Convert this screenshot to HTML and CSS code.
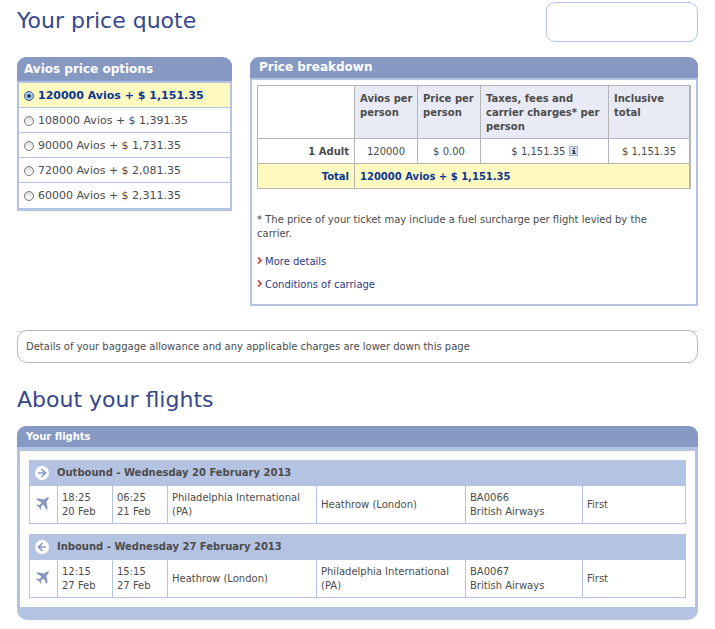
FILE: index.html
```html
<!DOCTYPE html>
<html lang="en">
<head>
<meta charset="utf-8">
<title>Your price quote</title>
<link rel="stylesheet" href="styles.css">
</head>
<body>
<svg class="defs" aria-hidden="true">
  <symbol id="plane" viewBox="0 0 14 14">
    <path d="M13.600.4c-.8-.3-2 .1-2.800.8L9 2.700 1.700 1.400.4 2.600l5.600 3.200L3.900 8.500 1.300 8.100.3 9.100l2.900 1.700 1.500 2.900 1-1-.3-2.600 2.700-2.100 3.200 5.600 1.200-1.300-1.300-7.300 1.600-1.800c.7-.8 1.200-2 .8-2.800z"/>
  </symbol>
  <symbol id="arrow" viewBox="0 0 14 14">
    <circle cx="7" cy="7" r="7" fill="#fff"/>
    <path d="M3 7h7M6.500 3 10.500 7 6.500 11" fill="none" stroke="currentColor" stroke-width="1.700"/>
  </symbol>
</svg>
<main class="page">
  <header class="top">
    <h1 class="title">Your price quote</h1>
    <div class="callout"></div>
  </header>

  <div class="quote">
    <form class="panel options">
      <h2 class="panel-head">Avios price options</h2>
      <div class="panel-body">
        <label class="option selected"><input type="radio" name="price" checked>120000 Avios + $ 1,151.35</label>
        <label class="option"><input type="radio" name="price">108000 Avios + $ 1,391.35</label>
        <label class="option"><input type="radio" name="price">90000 Avios + $ 1,731.35</label>
        <label class="option"><input type="radio" name="price">72000 Avios + $ 2,081.35</label>
        <label class="option"><input type="radio" name="price">60000 Avios + $ 2,311.35</label>
      </div>
    </form>

    <section class="panel breakdown">
      <h2 class="panel-head">Price breakdown</h2>
      <div class="panel-body">
        <table class="prices">
          <colgroup><col class="p-who"><col class="p-avios"><col class="p-price"><col class="p-taxes"><col class="p-total"></colgroup>
          <thead>
            <tr><td></td><th scope="col">Avios per person</th><th scope="col">Price per person</th><th scope="col">Taxes, fees and carrier charges* per person</th><th scope="col">Inclusive total</th></tr>
          </thead>
          <tbody>
            <tr><th scope="row">1 Adult</th><td>120000</td><td>$ 0.00</td><td>$ 1,151.35 <button type="button" class="info" aria-label="Information"><svg viewBox="0 0 9 10"><path d="M4 2h2v1H4zM3 4h3v3h1v1H3V7h1V5H3z"/></svg></button></td><td>$ 1,151.35</td></tr>
            <tr class="sum"><th scope="row">Total</th><td colspan="4">120000 Avios + $ 1,151.35</td></tr>
          </tbody>
        </table>
        <p class="note">* The price of your ticket may include a fuel surcharge per flight levied by the carrier.</p>
        <ul class="links">
          <li><svg viewBox="0 0 5 7"><path d="M1 .5 4 3.500 1 6.500"/></svg><a href="#">More details</a></li>
          <li><svg viewBox="0 0 5 7"><path d="M1 .5 4 3.500 1 6.500"/></svg><a href="#">Conditions of carriage</a></li>
        </ul>
      </div>
    </section>
  </div>

  <div class="baggage"><p>Details of your baggage allowance and any applicable charges are lower down this page</p></div>

  <h1 class="title">About your flights</h1>

  <section class="panel flights">
    <h2 class="panel-head">Your flights</h2>
    <div class="panel-body">
      <table class="flight">
        <colgroup><col class="f-icon"><col class="f-time"><col class="f-time"><col class="f-place"><col class="f-place"><col class="f-number"><col class="f-class"></colgroup>
        <thead><tr><th colspan="7"><div class="leg"><svg><use href="#arrow"/></svg>Outbound - Wednesday 20 February 2013</div></th></tr></thead>
        <tbody><tr><td class="plane"><svg><use href="#plane"/></svg></td><td>18:25<br>20 Feb</td><td>06:25<br>21 Feb</td><td>Philadelphia International (PA)</td><td>Heathrow (London)</td><td>BA0066<br>British Airways</td><td>First</td></tr></tbody>
      </table>
      <table class="flight">
        <colgroup><col class="f-icon"><col class="f-time"><col class="f-time"><col class="f-place"><col class="f-place"><col class="f-number"><col class="f-class"></colgroup>
        <thead><tr><th colspan="7"><div class="leg"><svg class="back"><use href="#arrow"/></svg>Inbound - Wednesday 27 February 2013</div></th></tr></thead>
        <tbody><tr><td class="plane"><svg><use href="#plane"/></svg></td><td>12:15<br>27 Feb</td><td>15:15<br>27 Feb</td><td>Heathrow (London)</td><td>Philadelphia International (PA)</td><td>BA0067<br>British Airways</td><td>First</td></tr></tbody>
      </table>
    </div>
  </section>
</main>
</body>
</html>
```
FILE: styles.css
```css
* { box-sizing: border-box; }
body {
  margin: 0;
  background: #fff;
  color: #4c4c4c;
  font: 10px/14px Verdana, "DejaVu Sans", sans-serif;
}
h1, h2, p, ul { margin: 0; padding: 0; }
.defs { display: none; }
.page { padding: 2px 17px 9px; }

.top { display: flex; justify-content: space-between; height: 40px; margin-bottom: 15px; }
.title { color: #37478b; font-size: 22px; font-weight: 400; line-height: 38px; }
.callout { width: 152px; border: 1px solid #b5c3e3; border-radius: 9px; }

.quote { display: grid; grid-template-columns: 215fr 448fr; gap: 18px; align-items: start; }
.panel-head {
  padding: 0 9px;
  border-radius: 9px 9px 0 0;
  background: #8699c3;
  color: #fff;
  font-size: 12px;
  line-height: 21px;
}
.panel-body { border: 2px solid #b5c3e3; }

.options .panel-head { padding: 0 7px; line-height: 24px; }
.options .panel-body { border-bottom-width: 3px; }
.option {
  display: flex;
  align-items: center;
  gap: 4px;
  height: 25px;
  padding: 1px 5px 0;
  border-bottom: 1px solid #b5c3e3;
  font-size: 11px;
  white-space: nowrap;
}
.option:last-child { border-bottom: 0; }
.selected { background: #fffabf; color: #0a3696; font-weight: 700; }
.option input {
  appearance: none;
  width: 10px;
  height: 10px;
  margin: 0;
  border: 1px solid #777;
  border-radius: 50%;
  background: linear-gradient(#dcdcdc, #fff);
}
.option input:checked {
  border-color: #42597e;
  background: radial-gradient(circle, #0b1c38 0 1px, #83b4e6 2px, #c9e8ff 5px);
}

.breakdown .panel-body { padding: 5px 5px 12px; }
table { width: 100%; table-layout: fixed; border-collapse: collapse; }
th, td { text-align: left; }
.prices { border-right: 2px solid #b5b5b5; }
.prices th, .prices td { height: 25px; padding: 5px 5px 4px; border: 1px solid #b5b5b5; }
.prices th:last-child, .prices td:last-child { border-right-width: 2px; }
.p-who { width: 97px; }
.p-avios, .p-price { width: 63px; }
.p-taxes { width: 128px; }
.prices thead th { height: 53px; padding: 6px 0 4px 5px; background: #e8ebf5; vertical-align: top; }
.prices tbody th { text-align: right; }
.prices tbody td { text-align: center; }
.prices .sum th, .prices .sum td { background: #fffabf; color: #0a3696; font-weight: 700; }
.prices .sum td { text-align: left; }
.info {
  width: 9px;
  height: 10px;
  padding: 0;
  border: 0;
  outline: 1px solid #a4b1c7;
  outline-offset: -1px;
  background: #d4deed;
  line-height: 0;
  vertical-align: -1px;
}
.info svg { width: 9px; height: 10px; fill: #39425a; }
.note { margin: 24px 0 14px; padding-right: 20px; }
.links { list-style: none; display: grid; gap: 9px; }
.links li { display: flex; gap: 3px; }
.links svg { width: 5px; height: 7px; margin-top: 2px; fill: none; stroke: #c9281e; stroke-width: 1.500; }
.links a { color: #2c3a82; text-decoration: none; }

.baggage { margin: 25px 0 18px; border-top: 1px dotted #bbb; }
.baggage p {
  margin-top: -2px;
  padding: 9px 8px 8px;
  border: 1px solid #b9b9b9;
  border-radius: 10px;
  background: #fff;
}

.flights { margin-top: 7px; }
.flights .panel-head { font-size: 10px; }
.flights .panel-body {
  display: grid;
  gap: 10px;
  padding: 9px;
  border-width: 4px 3px 13px;
  border-radius: 0 0 10px 10px;
}
.flight th { height: 25px; padding: 0 5px; border: 1px solid #b5c3e3; background: #b5c3e3; }
.flight td { height: 38px; padding: 4px; border: 1px solid #b5c3e3; }
.f-icon { width: 28px; }
.f-time { width: 55px; }
.f-place { width: 149px; }
.f-number { width: 117px; }
.leg { display: flex; align-items: center; gap: 8px; }
.leg svg { width: 14px; height: 14px; color: #8699c3; }
.leg .back { transform: scaleX(-1); }
.flight .plane { text-align: center; padding: 0 2px 2px 0; }
.plane svg { width: 13px; height: 13px; fill: #8699c3; vertical-align: middle; }
```
